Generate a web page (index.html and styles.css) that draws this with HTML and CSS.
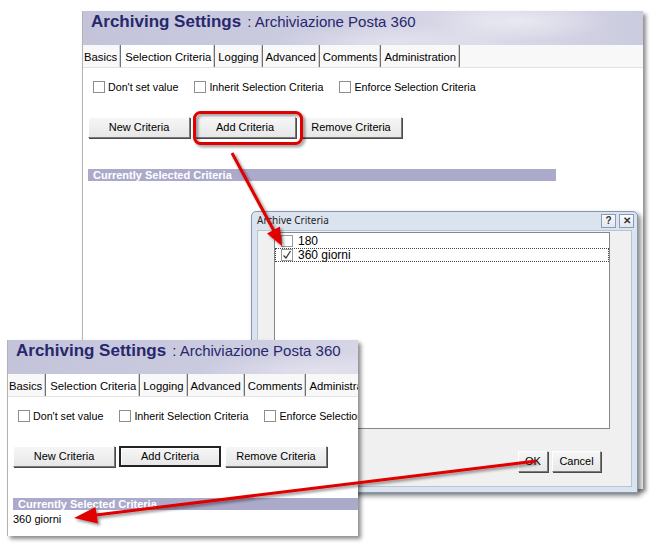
FILE: index.html
```html
<!DOCTYPE html>
<html lang="en">
<head>
    <meta charset="UTF-8">
    <title>Archiving Settings</title>
    <link rel="stylesheet" href="styles.css">
</head>
<body>
<div class="desk">

    <!-- back window -->
    <div class="win win-back">
        <div class="panel">
            <div class="title"><b>Archiving Settings</b><span>: Archiviazione Posta 360</span></div>
            <div class="tabs">
                <div class="tab">Basics</div>
                <div class="tab on">Selection Criteria</div>
                <div class="tab">Logging</div>
                <div class="tab">Advanced</div>
                <div class="tab">Comments</div>
                <div class="tab">Administration</div>
            </div>
            <div class="opts">
                <label><span class="chk"></span>Don't set value</label>
                <label><span class="chk"></span>Inherit Selection Criteria</label>
                <label><span class="chk"></span>Enforce Selection Criteria</label>
            </div>
            <div class="btns">
                <div class="btn">New Criteria</div>
                <div class="btn">Add Criteria</div>
                <div class="btn">Remove Criteria</div>
            </div>
            <div class="crit-bar">Currently Selected Criteria</div>
            <div class="crit-val"></div>
        </div>
    </div>

    <!-- dialog -->
    <div class="dlg">
        <div class="dlg-head">
            <span class="dlg-title">Archive Criteria</span>
            <span class="dlg-ctrls">
                <span class="cap-btn">?</span>
                <span class="cap-btn">&#x2715;</span>
            </span>
        </div>
        <div class="dlg-body">
            <div class="list">
                <div class="row"><span class="lchk"></span>180</div>
                <div class="row focus"><span class="lchk">
                    <svg width="10" height="10" viewBox="0 0 10 10"><polyline points="1.5,5.5 4,8 8.5,1" fill="none" stroke="#333" stroke-width="1.2"/></svg>
                </span>360 giorni</div>
            </div>
            <div class="dlg-foot">
                <div class="btn small ok">OK</div>
                <div class="btn small">Cancel</div>
            </div>
        </div>
    </div>

    <!-- front window (zoomed copy) -->
    <div class="win win-front">
        <div class="panel">
            <div class="title"><b>Archiving Settings</b><span>: Archiviazione Posta 360</span></div>
            <div class="tabs">
                <div class="tab">Basics</div>
                <div class="tab on">Selection Criteria</div>
                <div class="tab">Logging</div>
                <div class="tab">Advanced</div>
                <div class="tab">Comments</div>
                <div class="tab">Administration</div>
            </div>
            <div class="opts">
                <label><span class="chk"></span>Don't set value</label>
                <label><span class="chk"></span>Inherit Selection Criteria</label>
                <label><span class="chk"></span>Enforce Selection Criteria</label>
            </div>
            <div class="btns">
                <div class="btn">New Criteria</div>
                <div class="btn focused">Add Criteria</div>
                <div class="btn">Remove Criteria</div>
            </div>
            <div class="crit-bar">Currently Selected Criteria</div>
            <div class="crit-val">360 giorni</div>
        </div>
    </div>

    <!-- annotations -->
    <svg class="marks" width="658" height="545" viewBox="0 0 658 545">
        <defs>
            <filter id="shade" x="-10%" y="-10%" width="130%" height="130%">
                <feDropShadow dx="2" dy="2" stdDeviation="1.5" flood-color="#000" flood-opacity="0.45"/>
            </filter>
        </defs>
        <g filter="url(#shade)" fill="#e00000" stroke="#e00000">
            <rect x="194.5" y="112.5" width="107" height="31" rx="6" fill="none" stroke-width="3"/>
            <line x1="232" y1="153" x2="274" y2="231" stroke-width="3"/>
            <polygon points="282,246 267,233.5 280,226.5" stroke="none"/>
            <line x1="536" y1="461" x2="96" y2="515" stroke-width="3"/>
            <polygon points="74,518 95.5,507 98,523.5" stroke="none"/>
        </g>
    </svg>
</div>
</body>
</html>
```

FILE: styles.css
```css
body {
    margin: 0;
    background: #fff;
    font-family: "Liberation Sans", Arial, sans-serif;
    font-size: 11px;
    color: #000;
}

.desk {
    position: relative;
    width: 658px;
    height: 545px;
    overflow: hidden;
}

/* settings windows */
.win {
    position: absolute;
    background: #fff;
    border-left: 1px solid #b4b4b4;
    box-shadow: 3px 3px 4px rgba(0, 0, 0, 0.45);
    overflow: hidden;
}

.win-back {
    left: 82px;
    top: 11px;
    width: 560px;
    height: 478px;
}

.win-front {
    left: 7px;
    top: 340px;
    width: 350px;
    height: 196px;
    z-index: 3;
}

.panel {
    width: 560px;
}

.title {
    height: 34px;
    box-sizing: border-box;
    padding: 1px 0 0 8px;
    white-space: nowrap;
    color: #27276c;
    background:
        radial-gradient(ellipse 90px 20px at 78% 30%, rgba(255, 255, 255, 0.45), transparent),
        radial-gradient(ellipse 120px 18px at 55% 90%, rgba(255, 255, 255, 0.35), transparent),
        linear-gradient(90deg, #c3c3da 0%, #cdcde1 45%, #dadae9 72%, #cbcbdf 100%);
}

.title b {
    font-size: 17px;
    line-height: 20px;
}

.title span {
    font-size: 15px;
    margin-left: 6px;
}

.tabs {
    display: flex;
    height: 22px;
    border-bottom: 1px solid #e2e2e2;
    background: #f8f8f8;
    white-space: nowrap;
}

.tab {
    padding: 0 3px 0 3px;
    line-height: 24px;
    border-right: 1px solid #707070;
    box-shadow: inset -1px 0 #d0d0d0;
    font-size: 11.3px;
}

.tab:first-child {
    padding-left: 1px;
}

.tab.on {
    background: #fff;
    border-left: 1px solid #fff;
}

.opts {
    display: flex;
    gap: 16px;
    padding: 12px 0 0 10px;
    height: 13px;
    white-space: nowrap;
    font-size: 10.7px;
}

.opts label {
    display: flex;
    align-items: center;
}

.chk {
    width: 10px;
    height: 10px;
    border: 1px solid #8e8e8e;
    background: #fff;
    margin-right: 3px;
}

.btns {
    display: flex;
    gap: 4px;
    padding: 24px 0 0 5px;
}

.btn {
    width: 102px;
    height: 21px;
    box-sizing: border-box;
    text-align: center;
    line-height: 18px;
    background: linear-gradient(#f6f6f6, #e7e7e7);
    border: 1px solid;
    border-color: #fff #7a7a7a #7a7a7a #fff;
    box-shadow: 1px 1px 0 #4a4a4a;
    white-space: nowrap;
}

.btn.focused {
    border: 2px solid #222;
    box-shadow: inset 1px 1px 0 #fff;
    line-height: 16px;
}

.crit-bar {
    margin: 31px 0 0 5px;
    width: 468px;
    height: 12px;
    line-height: 12px;
    padding-left: 5px;
    box-sizing: border-box;
    background: #abaacb;
    color: #fff;
    font-weight: bold;
}

.crit-val {
    padding: 2px 0 0 5px;
    line-height: 14px;
}

/* archive criteria dialog */
.dlg {
    position: absolute;
    left: 251px;
    top: 211px;
    width: 387px;
    height: 282px;
    box-sizing: border-box;
    display: flex;
    flex-direction: column;
    padding: 0 5px 5px;
    background: #dbe4ee;
    border: 1px solid #8497b1;
    border-radius: 5px 5px 0 0;
    box-shadow: 3px 3px 5px rgba(0, 0, 0, 0.45);
    z-index: 2;
}

.dlg-head {
    height: 18px;
    display: flex;
    align-items: center;
    justify-content: space-between;
}

.dlg-title {
    font-family: "Noto Sans", "Liberation Sans", sans-serif;
    font-size: 10px;
    color: #1e1e1e;
    margin-top: -2px;
}

.dlg-ctrls {
    display: flex;
    gap: 3px;
    margin-right: -2px;
}

.cap-btn {
    width: 13px;
    height: 12px;
    border: 1px solid #8a9bb2;
    background: linear-gradient(#fafcfe, #dfe6ee);
    font-size: 10px;
    line-height: 12px;
    text-align: center;
    font-weight: bold;
    color: #333;
}

.dlg-body {
    flex: 1;
    background: #f0f0f0;
    border: 1px solid #b7c4d3;
    padding: 1px 0 0 16px;
    display: flex;
    flex-direction: column;
}

.list {
    width: 336px;
    height: 197px;
    box-sizing: border-box;
    border: 1px solid #828790;
    background: #fff;
    padding-top: 1px;
}

.row {
    height: 14px;
    display: flex;
    align-items: center;
    font-size: 12px;
    padding-left: 6px;
}

.row.focus {
    outline: 1px dotted #444;
    outline-offset: -1px;
}

.lchk {
    width: 10px;
    height: 10px;
    border: 1px solid #9a9a9a;
    background: #fff;
    margin-right: 5px;
    display: flex;
}

.dlg-foot {
    display: flex;
    justify-content: flex-end;
    gap: 4px;
    margin-top: 22px;
    padding-right: 30px;
}

.btn.small {
    width: 49px;
}

.btn.ok {
    width: 30px;
}

.marks {
    position: absolute;
    left: 0;
    top: 0;
    z-index: 5;
}
```
